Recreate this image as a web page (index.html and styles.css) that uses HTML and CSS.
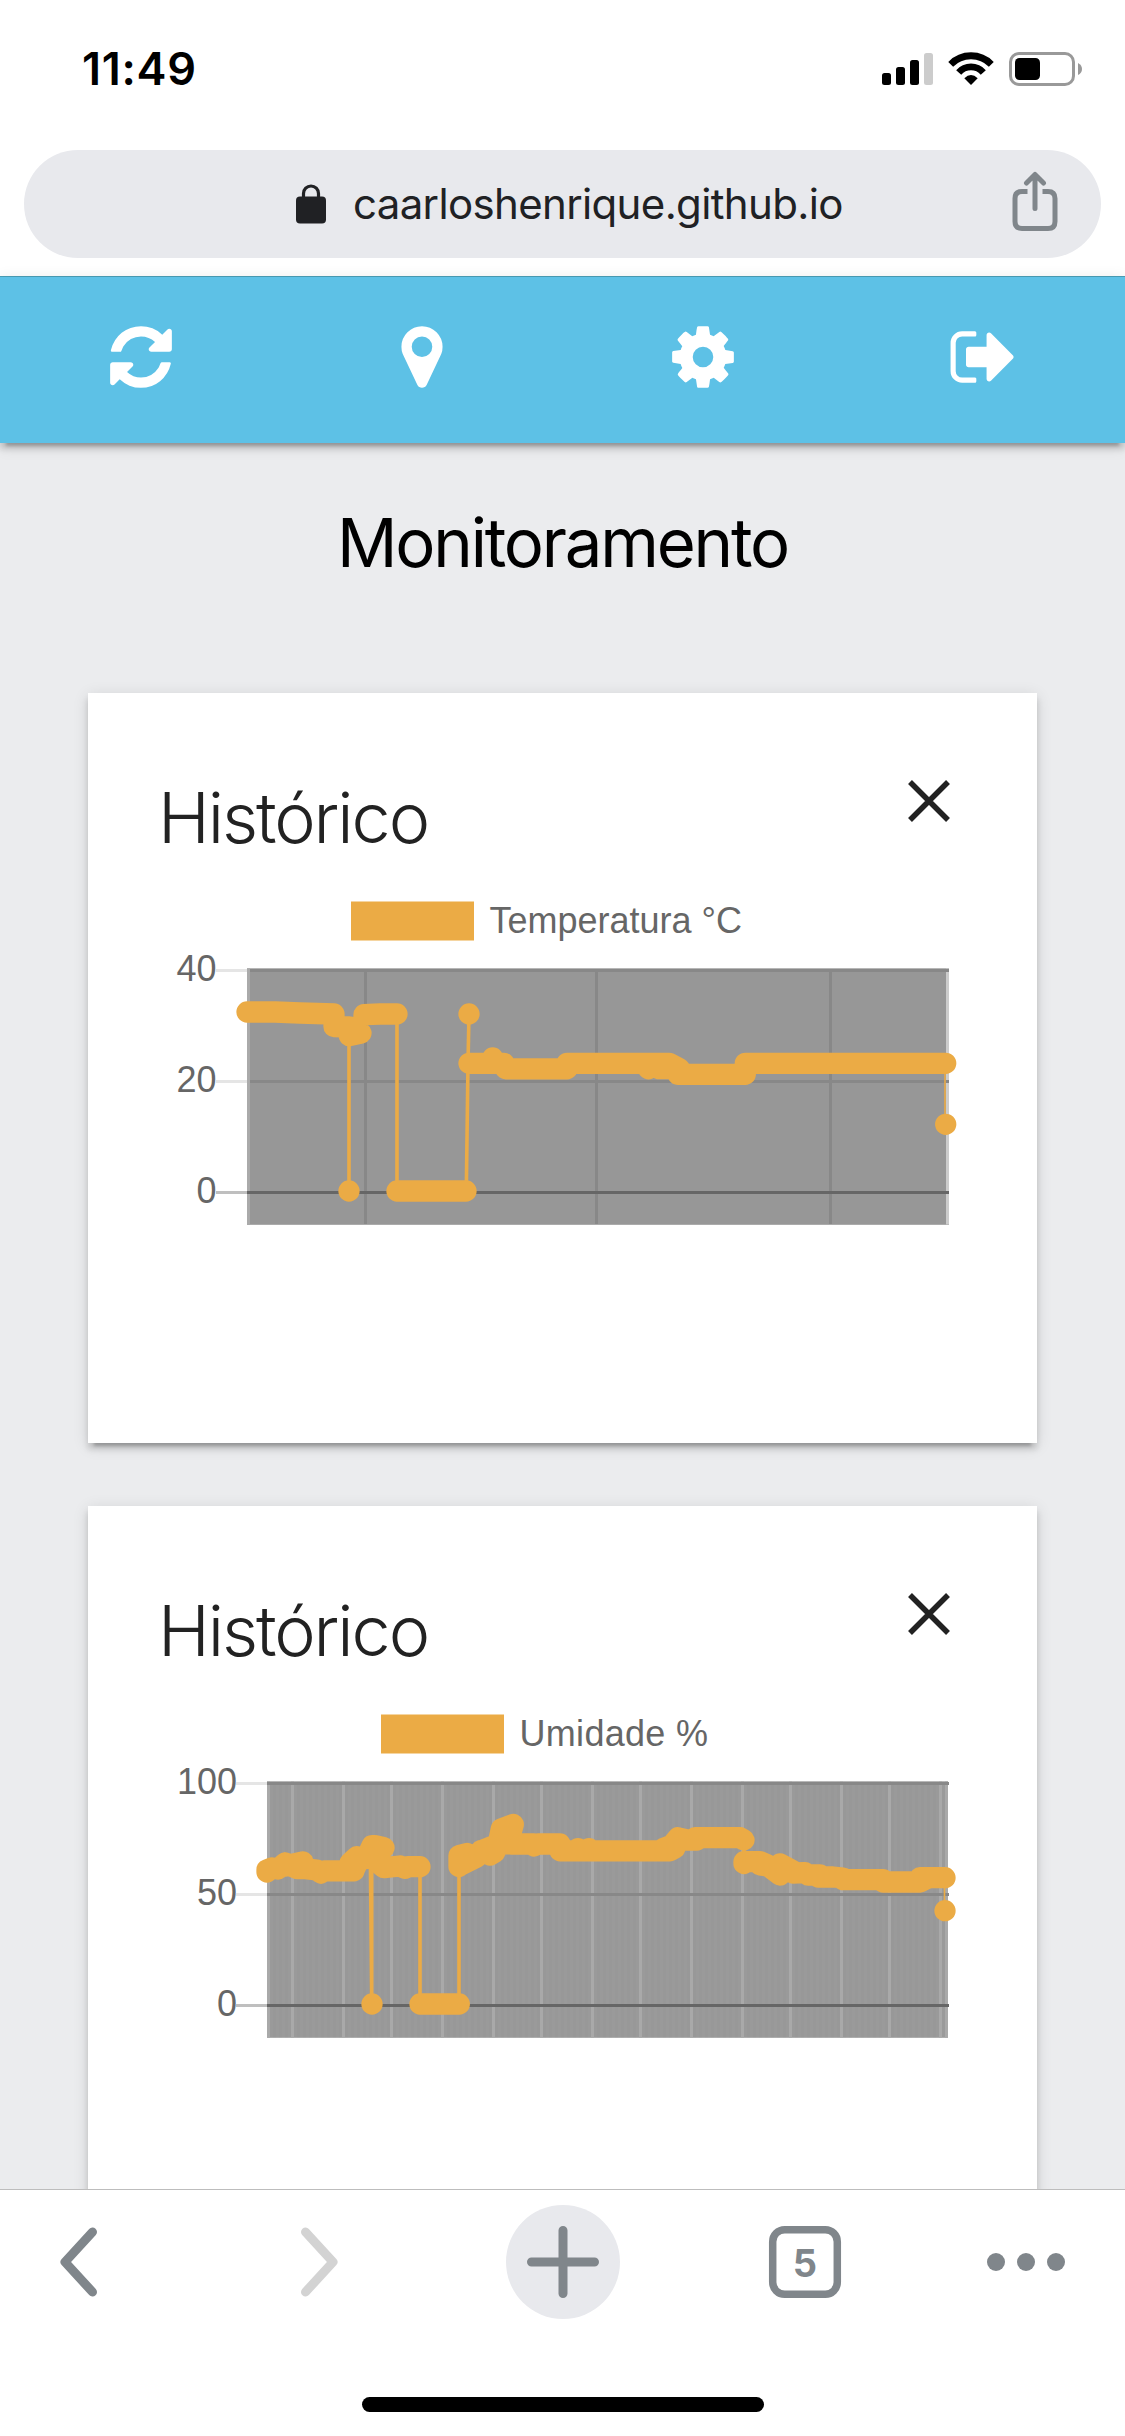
FILE: index.html
```html
<!DOCTYPE html>
<html lang="pt-BR">
<head>
<meta charset="utf-8">
<title>Monitoramento</title>
<link rel="stylesheet" href="styles.css">
</head>
<body>
<div class="screen">
  <header class="status">
    <span class="clock">11:49</span>
    <svg class="status-icons" width="202" height="36" viewBox="881 51 202 36">
      <rect x="882" y="73" width="9" height="12" rx="2.5"/>
      <rect x="896" y="67" width="9" height="18" rx="2.5"/>
      <rect x="910" y="60" width="9" height="25" rx="2.5"/>
      <rect x="924" y="53" width="9" height="32" rx="2.5" fill="#ccc"/>
      <path d="M950.7 64.3A28.4 28.4 0 0 1 991.300 64.300M958.700 72.400A16.500 16.500 0 0 1 983.300 72.400" fill="none" stroke="#000" stroke-width="6.800"/>
      <path d="M971 85L964.300 78.300Q971 71.700 977.700 78.300Z"/>
      <rect x="1010.500" y="53.500" width="63" height="31" rx="8.500" fill="none" stroke="#999" stroke-width="3"/>
      <rect x="1015" y="58" width="25" height="22" rx="4.500"/>
      <path d="M1078 63Q1082 65 1082 69T1078 75Z" fill="#999"/>
    </svg>
  </header>

  <div class="address">
    <div class="pill">
      <svg class="lock" width="30" height="40" viewBox="0 0 30 40">
        <path d="M7.500 14V9.500A7.500 7.500 0 0 1 22.500 9.500V14" fill="none" stroke="#202124" stroke-width="3.200"/>
        <rect y="12.500" width="30" height="27" rx="4" fill="#202124"/>
      </svg>
      <span class="url">caarloshenrique.github.io</span>
      <svg class="share" width="46" height="61" viewBox="1012.500 170 46 61">
        <path d="M1028 190.500H1022.500Q1015.500 190.500 1015.500 197.500V220.500Q1015.500 227.500 1022.500 227.500H1048.500Q1055.500 227.500 1055.500 220.500V197.500Q1055.500 190.500 1048.500 190.500H1043"/>
        <path d="M1035.500 207.500V175M1027 182L1035.500 173.500L1044 182" stroke-linecap="round" stroke-linejoin="round"/>
      </svg>
    </div>
  </div>

  <nav class="nav">
    <a class="nav-item"><svg class="fa" viewBox="0 0 1792 1792"><path d="M1639 1056q0 5-1 7-64 268-268 434.500t-478 166.500q-146 0-282.500-55t-243.500-157l-129 129q-19 19-45 19t-45-19-19-45v-448q0-26 19-45t45-19h448q26 0 45 19t19 45-19 45l-137 137q71 66 161 102t187 36q134 0 250-65t186-179q11-17 53-117 8-23 30-23h192q13 0 22.500 9.500t9.500 22.500zm25-800v448q0 26-19 45t-45 19h-448q-26 0-45-19t-19-45 19-45l138-138q-148-137-349-137-134 0-250 65t-186 179q-11 17-53 117-8 23-30 23h-199q-13 0-22.500-9.500t-9.500-22.500v-7q65-268 270-434.500t480-166.500q146 0 284 55.500t245 156.500l130-129q19-19 45-19t45 19 19 45z"/></svg></a>
    <a class="nav-item"><svg class="fa" viewBox="0 0 1792 1792"><path d="M1152 640q0-106-75-181t-181-75-181 75-75 181 75 181 181 75 181-75 75-181zm256 0q0 109-33 179l-364 774q-16 33-47.500 52t-67.500 19-67.500-19-46.500-52l-365-774q-33-70-33-179 0-212 150-362t362-150 362 150 150 362z"/></svg></a>
    <a class="nav-item"><svg class="fa" viewBox="0 0 1792 1792"><path d="M1152 896q0-106-75-181t-181-75-181 75-75 181 75 181 181 75 181-75 75-181zm512-109v222q0 12-8 23t-20 13l-185 28q-19 54-39 91 35 50 107 138 10 12 10 25t-9 23q-27 37-99 108t-94 71q-12 0-26-9l-138-108q-44 23-91 38-16 136-29 186-7 28-36 28h-222q-14 0-24.500-8.500t-11.500-21.500l-28-184q-49-16-90-37l-141 107q-10 9-25 9-14 0-25-11-126-114-165-168-7-10-7-23 0-12 8-23 15-21 51-66.500t54-70.500q-27-50-41-99l-183-27q-13-2-21-12.500t-8-23.500v-222q0-12 8-23t19-13l186-28q14-46 39-92-40-57-107-138-10-12-10-24 0-10 9-23 26-36 98.500-107.500t94.500-71.500q13 0 26 10l138 107q44-23 91-38 16-136 29-186 7-28 36-28h222q14 0 24.500 8.500t11.500 21.500l28 184q49 16 90 37l142-107q9-9 24-9 13 0 25 10 129 119 165 170 7 8 7 22 0 12-8 23-15 21-51 66.500t-54 70.500q26 50 41 98l183 28q13 2 21 12.500t8 23.500z"/></svg></a>
    <a class="nav-item"><svg class="fa" viewBox="0 0 1792 1792"><path d="M704 1440q0 4 1 20t.5 26.500-3 23.500-10 19.500-20.500 6.500h-320q-119 0-203.500-84.500t-84.500-203.500v-704q0-119 84.500-203.500t203.500-84.500h320q13 0 22.500 9.500t9.500 22.500q0 4 1 20t.5 26.500-3 23.500-10 19.500-20.500 6.500h-320q-66 0-113 47t-47 113v704q0 66 47 113t113 47h312l11.500 1 11.500 3 8 5.500 7 9 2 13.500zm928-544q0 26-19 45l-544 544q-19 19-45 19t-45-19-19-45v-288h-448q-26 0-45-19t-19-45v-384q0-26 19-45t45-19h448v-288q0-26 19-45t45-19 45 19l544 544q19 19 19 45z"/></svg></a>
  </nav>

  <main class="content">
    <h1 class="title">Monitoramento</h1>

    <section class="card">
      <div class="card-head">
        <h2 class="card-title">Histórico</h2>
        <svg class="close" width="42" height="42" viewBox="0 0 42 42"><path d="M2 2L40 40M40 2L2 40"/></svg>
      </div>
      <svg class="chart" width="948" height="370" viewBox="88 890 948 370">
        <rect x="351" y="901.500" width="123" height="39" class="swatch"/>
        <text x="489.500" y="933">Temperatura °C</text>
        <g text-anchor="end">
          <text x="216.500" y="981">40</text>
          <text x="216.500" y="1092">20</text>
          <text x="216.500" y="1203">0</text>
        </g>
        <path d="M216 970.500H247M216 1081.500H247" class="tick"/>
        <path d="M216 1192.500H247" class="tick-zero"/>
        <rect x="247" y="968.300" width="702" height="256.500" class="plot"/>
        <path d="M248.500 968.500V1224.500" stroke="#aaa" stroke-width="3"/>
        <path d="M947.500 968.500V1224.500" stroke="#ccc" stroke-width="3"/>
        <path d="M365.500 969V1224M596.500 969V1224M830.500 969V1224M250 970.500H949M250 1081.500H949" class="grid"/>
        <path d="M247 1192.500H949" class="zero"/>
        <path class="line" d="M349 1035V1191M397 1014V1191M466.300 1191L468 1063L469 1014"/>
        <path class="line thin" d="M945 1063V1124"/>
        <path class="dots" d="M247 1012L275 1012L300 1013L334 1014M334 1014L334 1026.500L349 1027L349.300 1035.600L361 1033L353 1027.500M364 1014.700L380 1014L397 1014M397 1191H466M469 1014h.01M349 1191h.01M469 1063.300H504L505.700 1068.800H567V1063.300H669L679 1068.500L678 1074.300H745.300V1063.300H945.700M492.700 1058h.01M648.500 1068.800h.01M659 1068.600H676M945.700 1124.300h.01"/>
      </svg>
    </section>

    <section class="card">
      <div class="card-head">
        <h2 class="card-title">Histórico</h2>
        <svg class="close" width="42" height="42" viewBox="0 0 42 42"><path d="M2 2L40 40M40 2L2 40"/></svg>
      </div>
      <svg class="chart" width="948" height="370" viewBox="88 1703 948 370">
        <defs><pattern id="stripes" width="6" height="10" patternUnits="userSpaceOnUse"><rect width="6" height="10" fill="#989898"/><rect width="3" height="10" fill="#9a9a9a"/></pattern></defs>
        <rect x="381" y="1714.500" width="123" height="39" class="swatch"/>
        <text x="519.500" y="1746" letter-spacing=".3">Umidade %</text>
        <g text-anchor="end">
          <text x="237" y="1794">100</text>
          <text x="237" y="1905">50</text>
          <text x="237" y="2016">0</text>
        </g>
        <path d="M236 1783.500H267M236 1894.500H267" class="tick"/>
        <path d="M236 2005.500H267" class="tick-zero"/>
        <rect x="267" y="1781.300" width="681" height="256.500" fill="url(#stripes)"/>
        <path d="M268.500 1781.500V2037.500M292.500 1781.500V2037.500M343.500 1781.500V2037.500M391.500 1781.500V2037.500M442.500 1781.500V2037.500M493.500 1781.500V2037.500M541.500 1781.500V2037.500M592.500 1781.500V2037.500M640.500 1781.500V2037.500M691.500 1781.500V2037.500M742.500 1781.500V2037.500M790.500 1781.500V2037.500M841.500 1781.500V2037.500M889.500 1781.500V2037.500M940.500 1781.500V2037.500M946.500 1781.500V2037.500" stroke="#a9a9a9" stroke-width="3"/>
        <path d="M267 1783.500H949M267 1894.500H949" class="grid"/>
        <path d="M267 2005.500H949" class="zero"/>
        <path class="line" d="M370.300 1850L371.700 2004V1860M420 1866V2004M459 2004V1866"/>
        <path class="line thin" d="M944.500 1877V1910"/>
        <path class="dots" d="M267 1872V1870L272 1868L278 1869L285 1863L285 1866L303 1862M285 1863L297 1868.500H303L316.700 1870L321 1873L324 1870.800H354L350 1863L356.700 1856.700L366 1858.500L372 1845.700H375L384 1847.700M372 1846V1858L384 1867.700L400 1866L405 1868.300L408 1866.700H420M350 1870V1863M354 1870L360 1858M372 2004h.01M420 2004H459.300M459 1866.500V1855.500L467 1853.500L477 1857L481 1850.500L490 1855L495 1852L499 1840L501.300 1829L513.300 1824.400L509 1840L511 1844H534V1846L538 1844H560V1850.800H670L675 1848L678 1837.700L672 1845L663 1848.700M459 1866L477 1857M481 1851L501 1843L513 1844M578 1848.700h.01M589 1848.700h.01M678 1838L687 1840H697L695 1837.700H740L744 1840M744 1863.500V1861.700H760L768 1865H760L768 1866L780 1875V1864L793 1871V1873L805 1872.700L808 1875L820 1875L818 1877H833L843 1878V1879.700H883V1882H920L928 1878L920 1877.700H945M945 1910.700h.01"/>
        <path class="line" d="M744 1840V1862"/>
      </svg>
    </section>
  </main>

  <footer class="toolbar">
    <svg class="tools" width="1125" height="116" viewBox="0 2204 1125 116">
      <g fill="none" stroke="#80868b" stroke-width="9" stroke-linecap="round" stroke-linejoin="round">
        <path d="M92.500 2232L65 2262L92.500 2292"/>
        <path d="M305.500 2232L333 2262L305.500 2292" stroke="#d3d3d3"/>
        <circle cx="563" cy="2262" r="57" fill="#e8e9ed" stroke="none"/>
        <path d="M531.500 2262H594.500M563 2230.500V2293.500"/>
        <rect x="772.700" y="2229.700" width="64.600" height="64.600" rx="12" stroke-width="7.500"/>
      </g>
      <g fill="#80868b">
        <text class="tab-count" x="805" y="2276.500" text-anchor="middle">5</text>
        <circle cx="996" cy="2262" r="9"/><circle cx="1026" cy="2262" r="9"/><circle cx="1056" cy="2262" r="9"/>
      </g>
    </svg>
    <div class="home"></div>
  </footer>
</div>
</body>
</html>
```

FILE: styles.css
```css
* { box-sizing: border-box; }
body { margin: 0; background: #fff; font-family: Inter, "Liberation Sans", sans-serif; }
svg { display: block; }
.screen { display: flex; flex-direction: column; width: 1125px; height: 2436px; overflow: hidden; }

.status { flex: none; display: flex; justify-content: space-between; align-items: center; height: 138px; padding: 0 42px 0 82px; }
.clock { font-size: 45px; font-weight: 600; line-height: 54px; letter-spacing: 0.7px; }

.address { flex: none; height: 139px; padding: 12px 24px 0; border-bottom: 1px solid #4a9fb8; }
.pill { display: flex; align-items: center; height: 108px; border-radius: 54px; background: #e8e9ed; padding: 0 43px 0 272px; }
.lock { margin-right: 27px; }
.url { font-size: 42px; line-height: 52px; color: #202124; letter-spacing: -0.65px; white-space: nowrap; }
.share { margin: -6px 0 0 auto; fill: none; stroke: #80868b; stroke-width: 5; }

.nav { flex: none; position: relative; z-index: 1; display: grid; grid-template-columns: repeat(4, 1fr); align-items: center; height: 166px; padding: 0 1px 6px 0; background: #5dc1e6; box-shadow: 0 6px 6px rgba(0,0,0,.14), 0 3px 15px rgba(0,0,0,.12), 0 9px 3px -6px rgba(0,0,0,.2); }
.nav-item { display: flex; justify-content: center; }
.fa { width: 72px; height: 72px; fill: #fff; }

.content { flex: 1; min-height: 0; overflow: hidden; background: #ebecee; padding: 0 88px; }
.title { margin: 0; padding-top: 60px; height: 250px; font-size: 67px; line-height: 80px; font-weight: 400; letter-spacing: -2.2px; text-align: center; color: #000; }
.card { width: 949px; height: 750px; margin-bottom: 63px; background: #fff; box-shadow: 0 6px 6px rgba(0,0,0,.14), 0 3px 15px rgba(0,0,0,.12), 0 9px 3px -6px rgba(0,0,0,.2); }
.card-head { display: flex; justify-content: space-between; height: 197px; padding: 83px 87px 0 70px; }
.card-title { margin: 0; font-size: 70px; line-height: 84px; font-weight: 300; letter-spacing: -2.1px; color: #222; }
.close { margin-top: 4px; stroke: #222; stroke-width: 5.5; }

.chart text { font-family: "Liberation Sans", Arial, sans-serif; font-size: 36px; fill: #666; }
.swatch { fill: #ebab45; }
.plot { fill: #979797; }
.tick { stroke: #e5e5e5; stroke-width: 3; }
.tick-zero { stroke: #bfbfbf; stroke-width: 3; }
.grid { stroke: #888; stroke-width: 3; }
.zero { stroke: #666; stroke-width: 3; }
.line { fill: none; stroke: #ebab45; stroke-width: 3.6; }
.thin { stroke-width: 1.6; }
.dots { fill: none; stroke: #ebab45; stroke-width: 21.3; stroke-linecap: round; stroke-linejoin: round; }

.toolbar { flex: none; display: flex; flex-direction: column; align-items: center; height: 247px; padding-top: 14px; border-top: 1px solid #bdbdbd; background: #fff; }
.tab-count { font-size: 38px; font-weight: 700; }
.home { width: 402px; height: 15px; margin-top: 77px; border-radius: 8px; background: #000; }
```
